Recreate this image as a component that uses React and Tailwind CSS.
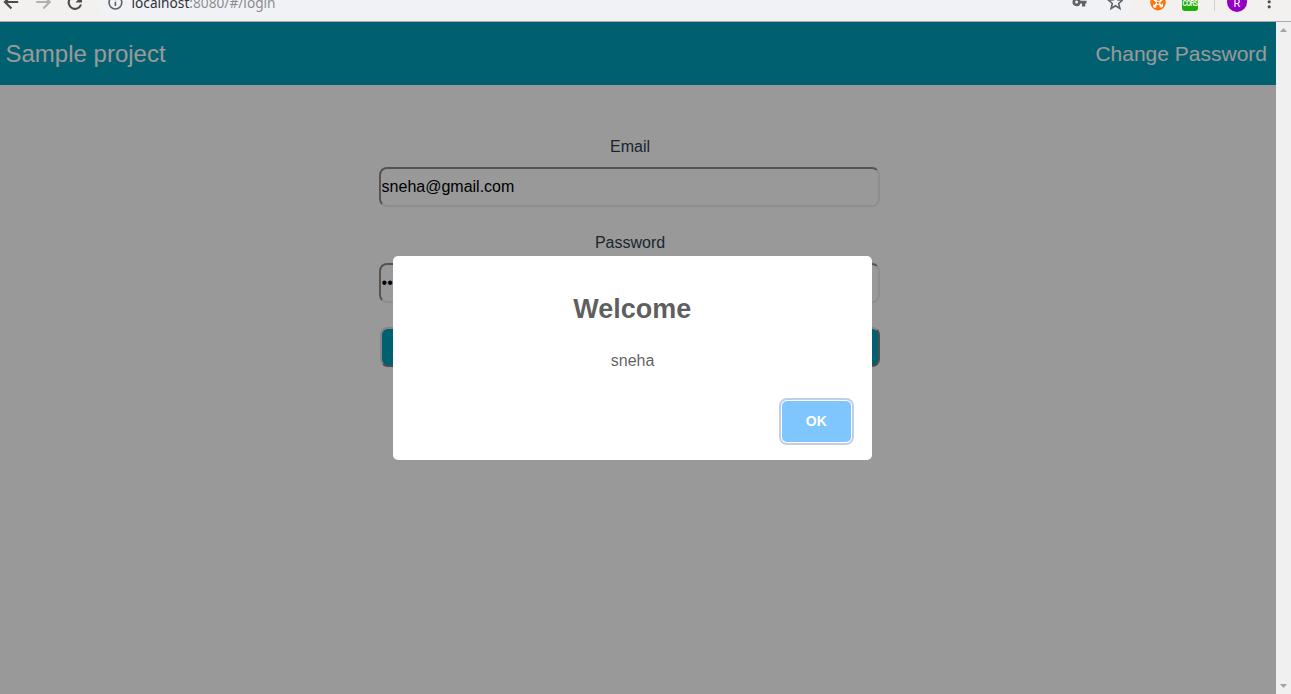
import React from "react";

function Toolbar() {
  return (
    <div className="h-[22px] shrink-0 overflow-hidden border-b border-[#a9a9a9] bg-[#f2f1f0]">
      <div className="-mt-[11px] flex h-7 items-center">
        <svg className="ml-[3px] h-7 w-4 shrink-0" viewBox="0 0 16 28" fill="none" stroke="#4a4c4e" strokeWidth="2.2">
          <path d="M15.2 13H2.6M8.4 6.5L2 13l6.4 6.5" />
        </svg>
        <svg className="ml-4 h-7 w-4 shrink-0" viewBox="0 0 16 28" fill="none" stroke="#b0b0b0" strokeWidth="2.2">
          <path d="M1.3 13H14M8.3 6.5l6.4 6.5-6.4 6.5" />
        </svg>
        <svg className="ml-4 h-7 w-4 shrink-0" viewBox="0 0 16 28" fill="none" stroke="#4a4c4e" strokeWidth="2.1">
          <path d="M14 15.5A6.3 6.3 0 1 1 12.7 9.3" />
          <path d="M15 6.5v7H8.5z" fill="#4a4c4e" stroke="none" />
        </svg>
        <div className="ml-[14px] flex h-7 w-[1036px] shrink-0 items-center rounded-full bg-[#f0f2f5]">
          <svg className="ml-[10px] h-7 w-4 shrink-0" viewBox="0 0 16 28" fill="none" stroke="#5f6368" strokeWidth="1.6">
            <circle cx="8.4" cy="13.6" r="6.4" />
            <path d="M8.4 12.8v4.3M8.4 9.6v1.6" />
          </svg>
          <span className="ml-[8.5px] w-[144px] whitespace-nowrap font-['Noto_Sans','Open_Sans',sans-serif] text-[13.7px] leading-7 text-[#8a8d91]">
            <span className="text-[#303236]">localhost</span>:8080/#/login
          </span>
          <svg className="ml-auto h-7 w-4 shrink-0" viewBox="0 0 16 28" fill="#5f6368">
            <path fillRule="evenodd" d="M5.6 9a4.1 4.1 0 1 0 3.9 5.4H11v3h3.2v-3h1.3v-2.6H9.5A4.1 4.1 0 0 0 5.6 9zm0 2.6a1.5 1.5 0 1 1 0 3 1.5 1.5 0 0 1 0-3z" />
          </svg>
          <svg className="mr-[10px] ml-5 h-7 w-4 shrink-0" viewBox="0 0 16 28" fill="none" stroke="#5f6368" strokeWidth="1.6">
            <path d="M8.5 5.9l2 4.8 5.1.4-3.9 3.4 1.2 5-4.4-2.7-4.4 2.7 1.2-5-3.9-3.4 5.1-.4z" />
          </svg>
        </div>
        <svg className="ml-[17px] h-7 w-4 shrink-0" viewBox="0 0 16 28">
          <circle cx="8" cy="13.6" r="7.8" fill="#f8750f" />
          <path d="M3.6 10l3 2.6M12.2 10.3l-2.8 2.8M6.6 15l-2.4 2.6M9.4 15l2.8 2.6" stroke="#fff" strokeWidth="2" />
          <path d="M3.8 15.5v2.6h2.6M12.4 14.6v3.2H9.6" fill="none" stroke="#fff" strokeWidth="1" />
          <circle cx="8" cy="13.8" r="1.7" fill="#f8750f" stroke="#fff" strokeWidth="1" />
        </svg>
        <span className="ml-4 -mt-px flex h-4 w-4 shrink-0 items-center justify-center rounded-[3px] bg-[#20ad0b]">
          <span className="font-['Liberation_Sans',sans-serif] text-[6px] font-bold leading-none tracking-[-0.6px] text-white [transform:scaleY(1.4)]">CORS</span>
        </span>
        <span className="ml-4 h-4 w-px shrink-0 bg-[#cfcfcf]" />
        <span className="-mt-[3px] ml-3 flex h-5 w-5 shrink-0 items-center justify-center rounded-full bg-[#9300c4] pt-[3px] font-['Roboto',sans-serif] text-[11px] leading-none text-white">
          R
        </span>
        <svg className="ml-[14px] h-7 w-4 shrink-0" viewBox="0 0 16 28" fill="#4a4c4e">
          <circle cx="8.2" cy="7.8" r="1.6" />
          <circle cx="8.2" cy="12.8" r="1.6" />
          <circle cx="8.2" cy="17.8" r="1.6" />
        </svg>
      </div>
    </div>
  );
}

function Field({ label, type, value }) {
  return (
    <label className="flex flex-col text-center">
      <span className="mb-[11px] h-[19px] pl-px leading-[19px]">{label}</span>
      <input
        type={type}
        defaultValue={value}
        className="h-10 w-full rounded-lg border-2 border-t-[#8c8c8c] border-l-[#8c8c8c] border-r-[#ededed] border-b-[#ededed] py-px pl-[0.6px] text-base text-black outline-none"
      />
    </label>
  );
}

function Scrollbar() {
  return (
    <div className="flex w-[15px] shrink-0 flex-col items-center justify-between bg-[#f0f0f0] pt-[5px] pb-[5px]">
      <svg className="h-[5px] w-[7px]" viewBox="0 0 7 5" fill="#a3a3a3"><path d="M0 5l3.5-4L7 5z" /></svg>
      <svg className="h-[5px] w-[7px]" viewBox="0 0 7 5" fill="#a3a3a3"><path d="M0 0l3.5 4L7 0z" /></svg>
    </div>
  );
}

export default function App() {
  return (
    <div className="flex h-[694px] w-[1291px] flex-col overflow-hidden font-['Liberation_Sans',Arial,sans-serif]">
      <Toolbar />
      <div className="flex min-h-0 flex-1">
        <main className="relative min-w-0 flex-1 bg-white text-[#2c3e50]">
          <header className="flex h-[62.5px] items-center justify-between bg-[#00a0bb] pr-[9px] pl-[5.5px] text-white">
            <span className="pt-px text-2xl">Sample project</span>
            <span className="text-[21px]">Change Password</span>
          </header>
          <form className="mt-[52.5px] ml-[379px] flex w-[501px] flex-col gap-[26px]">
            <Field label="Email" type="text" value="sneha@gmail.com" />
            <Field label="Password" type="password" value="••" />
            <button type="button" aria-label="Submit" className="-mt-[2px] ml-px h-10 rounded-lg border-2 border-t-[#dcdcdc] border-l-[#dcdcdc] border-r-[#808080] border-b-[#808080] bg-[#00a0bb]" />
          </form>
          <div className="absolute inset-0 flex items-center justify-center bg-black/40 pr-[11.5px]">
            <section className="flex h-[204px] w-[478.5px] flex-col items-center rounded-[5px] bg-white">
              <h2 className="mt-[37px] text-[27px] leading-8 font-bold text-black/65">Welcome</h2>
              <p className="mt-[25.5px] pl-[0.6px] leading-5 text-black/65">sneha</p>
              <button type="button" className="mt-[30.5px] mr-[20.5px] h-[41px] w-[69.5px] self-end rounded-[5px] bg-[#7fc5fe] pb-[2px] text-sm font-semibold text-white shadow-[0_0_0_1px_#fff,0_0_0_3px_rgba(43,90,165,0.29)]">
                OK
              </button>
            </section>
          </div>
        </main>
        <Scrollbar />
      </div>
    </div>
  );
}
